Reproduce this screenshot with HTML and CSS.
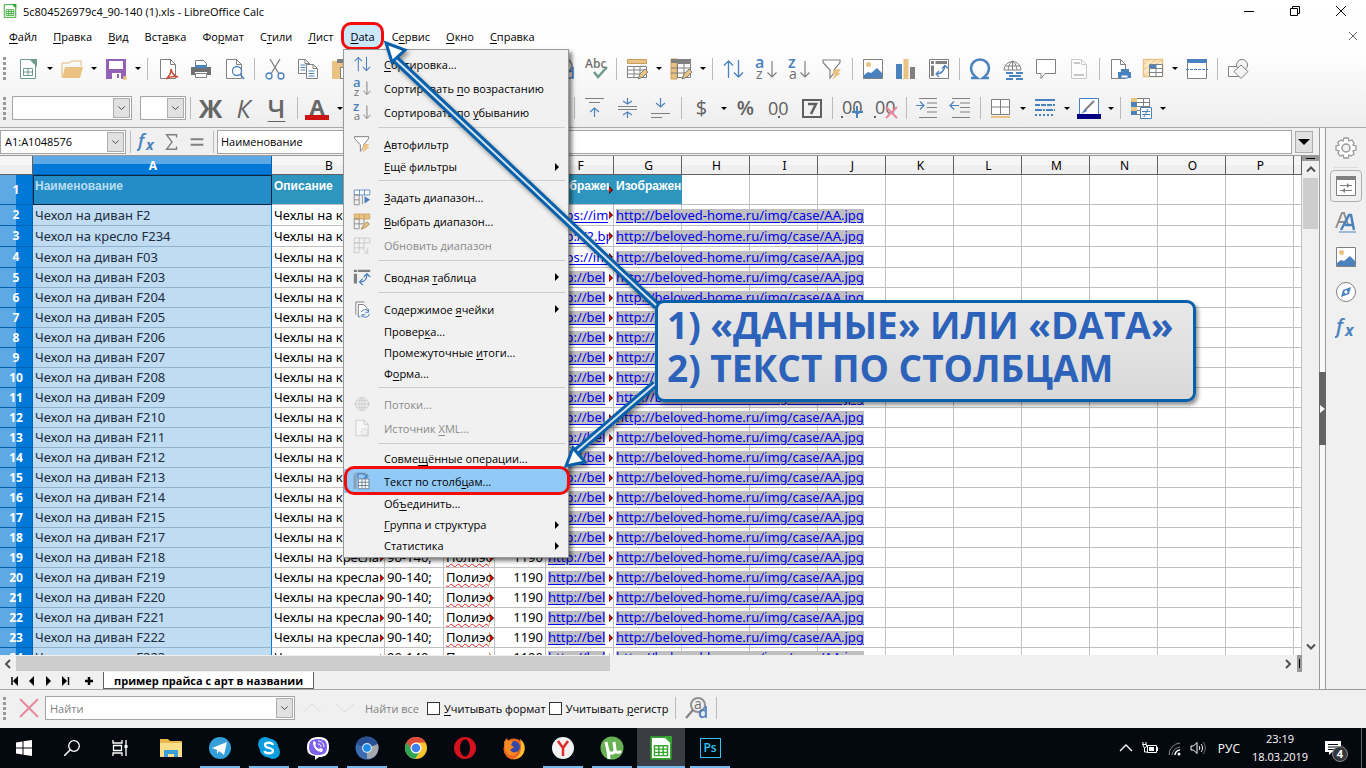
FILE: index.html
```html
<!DOCTYPE html>
<html lang="ru">
<head>
    <meta charset="UTF-8">
    <meta name="viewport" content="width=device-width, initial-scale=1.0">
    <title>5c804526979c4_90-140 (1).xls - LibreOffice Calc</title>
    <link rel="stylesheet" href="styles.css">
</head>
<body>
    <!-- shared icons -->
    <svg class="sprite" aria-hidden="true">
        <symbol id="i-sort" viewBox="0 0 22 22"><path d="M6.500 20V3M2 7.500L6.500 3 11 7.500M16.500 2v17M12 14.500l4.500 4.500 4.500-4.500" fill="none" stroke="#4a82bd" stroke-width="1.300"/></symbol>
        <symbol id="i-az" viewBox="0 0 22 22"><text x="0" y="10" class="g-blue">a</text><text x="1" y="21" class="g-grey">z</text><path d="M17 3v16M12.500 14.500L17 19l4.500-4.500" fill="none" stroke="#808080" stroke-width="1.200"/></symbol>
        <symbol id="i-za" viewBox="0 0 22 22"><text x="0" y="10" class="g-blue">z</text><text x="1" y="21" class="g-grey">a</text><path d="M17 3v16M12.500 14.500L17 19l4.500-4.500" fill="none" stroke="#808080" stroke-width="1.200"/></symbol>
        <symbol id="i-filter" viewBox="0 0 22 22"><path d="M2 2h17v2.500l-6 7.500v3l-4 5v-8L2 4.500z" fill="#fff" stroke="#808080" stroke-width="1.200"/><path d="M14 11h6l-3 4h3l-9 7 3-6h-3z" fill="#eac282"/></symbol>
        <symbol id="i-image" viewBox="0 0 22 22"><path d="M1.500 1.500h19v19h-19z" fill="#fff" stroke="#808080"/><circle cx="6.500" cy="6.500" r="2.500" fill="#eac282"/><path d="M2 20v-3l4-3 3 1 6-5 5 5v5z" fill="#4a82bd"/></symbol>
        <symbol id="i-pivot" viewBox="0 0 22 22"><path d="M1.500 1.500h19v19h-19z" fill="#fff" stroke="#808080"/><path d="M3 3h3v3H3zM7.500 3H19v3H7.500zM3 7.500h3V18H3z" fill="#808080"/><path d="M8 16c5 0 8-3 9-8M14 10.500L17 7.500l3 3M11 13l-3 3 3 3" fill="none" stroke="#4a82bd" stroke-width="1.300"/></symbol>
        <symbol id="i-fx" viewBox="0 0 22 22"><text x="1" y="17" class="g-f">f</text><text x="10" y="20" class="g-x">x</text></symbol>
        <symbol id="i-page" viewBox="0 0 22 22"><path d="M3.500 1.500h10l5 5v14h-15z" fill="#fff" stroke="#808080"/><path d="M13.500 1.500v5h5" fill="none" stroke="#808080"/></symbol>
        <symbol id="i-calc" viewBox="0 0 22 22"><path d="M2 1h13l5 5v15H2z" fill="#fff" stroke="#35a630" stroke-width="1.500"/><path d="M14 0h7v7z" fill="#35a630"/><path d="M5 9h12v9H5zM5 12h12M5 15h12M9 9v9M13 9v9" fill="none" stroke="#35a630" stroke-width="1.300"/></symbol>
        <symbol id="i-globe" viewBox="0 0 22 22"><path d="M3 11a8 8 0 0 1 16 0a8 8 0 0 1-16 0zM1 11h20M11 3v16M11 3c-5 4-5 12 0 16M11 3c5 4 5 12 0 16M4.500 7h13M4.500 15h13" fill="none" stroke="currentColor"/></symbol>
        <symbol id="i-find" viewBox="0 0 22 22"><circle cx="13" cy="8" r="7" fill="none" stroke="#909090" stroke-width="2"/><path d="M8 13l-7 8" stroke="#808080" stroke-width="2"/><text x="9" y="12" class="g-grey">a</text><text x="13" y="21" class="g-blue">d</text></symbol>
        <symbol id="i-down" viewBox="0 0 10 10"><path d="M1 3l4 4 4-4" fill="none" stroke="#444" stroke-width="1.200"/></symbol>
    </svg>

    <header class="top">
        <div class="titlebar">
            <svg class="appicon"><use href="#i-calc"/></svg>
            <h1>5c804526979c4_90-140 (1).xls - LibreOffice Calc</h1>
            <div class="winbtns">
                <button aria-label="Свернуть"><svg viewBox="0 0 12 12"><path d="M1 6.500h10" stroke="#000"/></svg></button>
                <button aria-label="Восстановить"><svg viewBox="0 0 12 12"><path d="M1.500 3.500h7v7h-7zM3.500 3V1.500h7v7H9" fill="none" stroke="#000"/></svg></button>
                <button aria-label="Закрыть"><svg viewBox="0 0 12 12"><path d="M1 1l10 10M11 1L1 11" stroke="#000"/></svg></button>
            </div>
        </div>
        <nav class="menubar">
            <button><u>Ф</u>айл</button>
            <button><u>П</u>равка</button>
            <button><u>В</u>ид</button>
            <button>Вст<u>а</u>вка</button>
            <button>Фо<u>р</u>мат</button>
            <button>С<u>т</u>или</button>
            <button><u>Л</u>ист</button>
            <button class="open"><u>D</u>ata</button>
            <button>С<u>е</u>рвис</button>
            <button><u>О</u>кно</button>
            <button><u>С</u>правка</button>
            <button class="docclose" aria-label="Закрыть документ"><svg viewBox="0 0 10 10"><path d="M1 1l8 8M9 1L1 9" stroke="#666"/></svg></button>
        </nav>

        <div class="toolbar">
            <i class="grip"></i>
            <button class="ic"><svg viewBox="0 0 22 22"><path d="M3.500 1.500h10l5 5v14h-15z" fill="#fff" stroke="#6d9c8e"/><path d="M12 1h8v8z" fill="#6d9c8e"/><path d="M6.500 10.500h9v7h-9zM6.500 14h9M11 10.500v7" fill="none" stroke="#6d9c8e"/></svg></button><button class="dd"></button>
            <button class="ic wide"><svg viewBox="0 0 22 22"><path d="M1 19V5h7l3-2h9v5" fill="none" stroke="#e3b877"/><path d="M1 20L4 9h18l-3 11z" fill="#eac282"/></svg></button><button class="dd"></button>
            <button class="ic"><svg viewBox="0 0 22 22"><path d="M1 1h20v20H1z" fill="#9361b5"/><path d="M4 3h14v8H4zM7 15h9v6H7z" fill="#fff"/><path d="M12 16h2v4h-2z" fill="#9361b5"/><circle cx="20" cy="20" r="2" fill="#eac282"/></svg></button><button class="dd"></button>
            <i class="sep"></i>
            <button class="ic"><svg viewBox="0 0 22 22"><use href="#i-page"/><path d="M9 21c4-3 5-7 5-10 1 5 3 7 7 8-5-1-9 0-12 2z" fill="#fff" stroke="#d04a35" stroke-width="1.500"/></svg></button>
            <button class="ic"><svg viewBox="0 0 22 22"><path d="M5.500 2.500h8l3 3v4h-11z" fill="#fff" stroke="#808080"/><path d="M1 9h20v8h-4v-3H5v3H1z" fill="#707070"/><path d="M5 7h12v3H5z" fill="#4a82bd"/><path d="M5.500 15.500h11v4h-11z" fill="#fff" stroke="#808080"/></svg></button>
            <button class="ic"><svg viewBox="0 0 22 22"><use href="#i-page"/><circle cx="14" cy="13" r="4.500" fill="#fff" stroke="#4a82bd" stroke-width="1.300"/><path d="M17 16l4 5" stroke="#4a82bd" stroke-width="1.500"/></svg></button>
            <i class="sep"></i>
            <button class="ic"><svg viewBox="0 0 22 22"><path d="M6 1l8.500 14M16 1L7.500 15" stroke="#808080" stroke-width="1.300"/><circle cx="5" cy="18" r="3" fill="none" stroke="#4a82bd" stroke-width="1.300"/><circle cx="17" cy="18" r="3" fill="none" stroke="#4a82bd" stroke-width="1.300"/></svg></button>
            <button class="ic"><svg viewBox="0 0 22 22"><path d="M1.500 1.500h7l4 4v10h-11zM8 1.500v4h4" fill="#fff" stroke="#808080"/><path d="M9.500 6.500h7l4 4v10h-11zM16 6.500v4h4" fill="#fff" stroke="#808080"/><path d="M3.500 7h5M3.500 9.500h5M3.500 12h5M11.500 13h6M11.500 15.500h6M11.500 18h6" stroke="#4a82bd"/></svg></button>
            <button class="ic"><svg viewBox="0 0 22 22"><path d="M2 3h18v18H2z" fill="#eac282"/><path d="M7 1h8v4H7z" fill="#808080"/><path d="M10.500 9.500h10v11h-10z" fill="#fff" stroke="#808080"/></svg></button><button class="dd"></button>
            <i class="sep"></i>
            <button class="ic"><svg viewBox="0 0 22 22"><path d="M2 10h14v10H2z" fill="#eac282"/></svg></button>
            <button class="ic"><svg viewBox="0 0 22 22"><path d="M3 18L11 2l8 16" fill="none" stroke="#808080"/></svg></button>
            <i class="sep"></i>
            <button class="ic"><svg viewBox="0 0 22 22"><path d="M3 8h12a5 5 0 0 1 0 10M7 4L3 8l4 4" fill="none" stroke="#4a82bd"/></svg></button><button class="dd"></button>
            <button class="ic"><svg viewBox="0 0 22 22"><path d="M19 8H7a5 5 0 0 0 0 10M15 4l4 4-4 4" fill="none" stroke="#4a82bd"/></svg></button><button class="dd"></button>
            <i class="sep"></i>
            <button class="ic"><svg><use href="#i-find"/></svg></button>
            <button class="ic wide"><svg viewBox="0 0 22 22"><text x="0" y="10" class="g-abc">Abc</text><path d="M9 14l4 5 9-10" fill="none" stroke="#6d9c8e" stroke-width="2.500"/></svg></button>
            <i class="sep"></i>
            <button class="ic"><svg viewBox="0 0 22 22"><path d="M1.500 1.500h19v4h-19z" fill="#eac282" stroke="#c99d5b"/><path d="M1.500 8.500h19v11h-19zM1.500 12h19M1.500 16h19M8 8v12M14 8v12" fill="#fff" stroke="#808080"/><path d="M12 21l2-5 5-5 3 3-5 5z" fill="#eac282" stroke="#808080"/></svg></button><button class="dd"></button>
            <button class="ic"><svg viewBox="0 0 22 22"><path d="M1 1h6v20H1z" fill="#eac282" stroke="#c99d5b"/><path d="M1 1h20v4H1z" fill="#808080"/><path d="M7.500 5.500h13v14h-13zM7 10h13M7 15h13M14 5v15M1 10h6M1 15h6" fill="none" stroke="#808080"/><path d="M12 21l2-5 5-5 3 3-5 5z" fill="#eac282" stroke="#808080"/></svg></button><button class="dd"></button>
            <i class="sep"></i>
            <button class="ic"><svg><use href="#i-sort"/></svg></button>
            <button class="ic"><svg><use href="#i-az"/></svg></button>
            <button class="ic"><svg><use href="#i-za"/></svg></button>
            <button class="ic"><svg><use href="#i-filter"/></svg></button>
            <i class="sep"></i>
            <button class="ic"><svg><use href="#i-image"/></svg></button>
            <button class="ic"><svg viewBox="0 0 22 22"><path d="M1 6h6v15H1z" fill="#4a82bd"/><path d="M8.500 1h5v20h-5z" fill="#eac282"/><path d="M15 9h5v12h-5z" fill="#808080"/></svg></button>
            <button class="ic"><svg><use href="#i-pivot"/></svg></button>
            <i class="sep"></i>
            <button class="ic"><svg viewBox="0 0 22 22"><path d="M2 20h6c-4-3-6-6-6-10a9 8.500 0 0 1 18 0c0 4-2 7-6 10h6" fill="none" stroke="#4a82bd" stroke-width="2.500"/></svg></button>
            <button class="ic"><svg viewBox="0 0 22 22"><path d="M2 12a8.500 8.500 0 0 1 17 0zM10.500 3v9M10.500 3c-5 4-4 8-4 9M10.500 3c5 4 4 8 4 9M3 8h15" fill="none" stroke="#808080"/><path d="M4 15h7M14 15h7M7 18h12M4 21h7M14 21h7" stroke="#4a82bd" stroke-width="2"/></svg></button>
            <button class="ic"><svg viewBox="0 0 22 22"><path d="M1.500 1.500h19v14H10l-4 5v-5H1.500z" fill="#fff" stroke="#808080"/></svg></button>
            <button class="ic dim"><svg viewBox="0 0 22 22"><use href="#i-page"/><path d="M6 5h6M6 17h10" stroke="#808080" stroke-width="2"/></svg></button>
            <i class="sep"></i>
            <button class="ic"><svg viewBox="0 0 22 22"><path d="M2.500 1.500h9l5 5v14h-14zM11.500 1.500v5h5" fill="#fff" stroke="#808080"/><path d="M12 11h8v3h-8zM9 14h13v6H9z" fill="#4a82bd"/><path d="M12 17h7v3h-7z" fill="#fff" stroke="#4a82bd"/></svg></button>
            <button class="ic"><svg viewBox="0 0 22 22"><path d="M1.500 1.500h19v17h-19z" fill="#fbe9cb" stroke="#eac282" stroke-width="1.500"/><path d="M1 7l6-5M8 6l6-4M14 6l6-4M1 12l6-4M1 18l6-4" stroke="#eac282"/><path d="M7.500 6.500h13v12h-13zM7.500 10.500h13M7.500 14.500h13M14 6.500v12" fill="#fff" stroke="#808080"/><path d="M8 7h6v3H8z" fill="#4a82bd"/></svg></button><button class="dd"></button>
            <button class="ic"><svg viewBox="0 0 22 22"><path d="M1.500 1.500h19v19h-19z" fill="#fff" stroke="#808080"/><path d="M1 1h20v4H1z" fill="#4a82bd"/><path d="M0 11.500h22" stroke="#4a82bd" stroke-dasharray="3 1"/></svg></button>
            <i class="sep"></i>
            <button class="ic"><svg viewBox="0 0 22 22"><path d="M1.500 8.500h11v10h-11z" fill="#fff" stroke="#808080"/><circle cx="15" cy="7" r="5.500" fill="#f4f4f4" stroke="#808080"/><path d="M14 7l7 6.500-7 7-7-7z" fill="#f4f4f4" stroke="#808080"/></svg></button>
        </div>

        <div class="toolbar second">
            <i class="grip"></i>
            <span class="combo fontname"><select aria-label="Гарнитура"><option></option></select><svg><use href="#i-down"/></svg></span>
            <span class="combo fontsize"><select aria-label="Размер"><option></option></select><svg><use href="#i-down"/></svg></span>
            <i class="sep"></i>
            <button class="ic letter"><b>Ж</b></button>
            <button class="ic letter"><em>К</em></button>
            <button class="ic letter"><u>Ч</u></button>
            <i class="sep"></i>
            <button class="ic letter color">A</button><button class="dd"></button>
            <button class="ic letter">A</button><button class="dd"></button>
            <i class="sep"></i>
            <button class="ic"></button><button class="ic"></button><button class="ic"></button>
            <i class="sep"></i>
            <button class="ic"></button><button class="ic"></button>
            <i class="sep"></i>
            <button class="ic"><svg viewBox="0 0 22 22"><path d="M1 1.500h19M5 5.500h11" stroke="#808080"/><path d="M10.500 20v-9M6 15l4.500-4 4.500 4" fill="none" stroke="#4a82bd" stroke-width="1.200"/></svg></button>
            <button class="ic"><svg viewBox="0 0 22 22"><path d="M1 9.500h19M1 12.500h19" stroke="#808080"/><path d="M10.500 1v6M6 4l4.500 3L15 4M10.500 21v-6M6 18l4.500-3 4.500 3" fill="none" stroke="#4a82bd" stroke-width="1.200"/></svg></button>
            <button class="ic"><svg viewBox="0 0 22 22"><path d="M1 20.500h11M1 16.500h19" stroke="#808080"/><path d="M10.500 1v9M6 6l4.500 4L15 6" fill="none" stroke="#4a82bd" stroke-width="1.200"/></svg></button>
            <i class="sep"></i>
            <button class="ic num">$</button><button class="dd"></button>
            <button class="ic num pct">%</button>
            <button class="ic wide"><svg viewBox="0 0 22 22"><text x="0" y="18" class="g-num">00</text><path d="M10 19h2v2h-2z" fill="#606060"/></svg></button>
            <button class="ic"><svg viewBox="0 0 22 22"><path d="M2 3h18v17H2z" fill="none" stroke="#606060" stroke-width="2"/><path d="M7 7h8l-5 10" fill="none" stroke="#606060" stroke-width="2.500"/></svg></button>
            <i class="sep"></i>
            <button class="ic wide"><svg viewBox="0 0 22 22"><text x="0" y="17" class="g-num">00</text><path d="M-1 19h2v2h-2z" fill="#606060"/><path d="M15 9v12M10 15h11" stroke="#4a82bd" stroke-width="2"/></svg></button>
            <button class="ic wide"><svg viewBox="0 0 22 22"><text x="0" y="17" class="g-num">00</text><path d="M-1 19h2v2h-2z" fill="#606060"/><path d="M11 10l11 11M22 10L11 21" stroke="#e8889c" stroke-width="2"/></svg></button>
            <i class="sep"></i>
            <button class="ic"><svg viewBox="0 0 22 22"><path d="M3 1.500h18M11 6h10M11 10.500h10M11 15h10M3 20.500h18" stroke="#808080"/><path d="M0 8.500h8M4 4.500l4 4-4 4" fill="none" stroke="#4a82bd" stroke-width="1.200"/></svg></button>
            <button class="ic"><svg viewBox="0 0 22 22"><path d="M3 1.500h18M11 6h10M11 10.500h10M11 15h10M3 20.500h18" stroke="#808080"/><path d="M1 8.500h9M5 4.500l-4 4 4 4" fill="none" stroke="#4a82bd" stroke-width="1.200"/></svg></button>
            <i class="sep"></i>
            <button class="ic"><svg viewBox="0 0 22 22"><path d="M1.500 2.500h18v15h-18zM1.500 10h18M10.500 2.500v15" fill="#fff" stroke="#808080"/><path d="M1 20h19" stroke="#eac282" stroke-width="2"/></svg></button><button class="dd"></button>
            <button class="ic"><svg viewBox="0 0 22 22"><path d="M1 3h20" stroke="#4a82bd" stroke-width="2"/><path d="M1 8h20" stroke="#4a82bd" stroke-width="2" stroke-dasharray="5 1"/><path d="M1 13h20" stroke="#4a82bd" stroke-width="2" stroke-dasharray="7 1 2 1"/><path d="M1 18h20" stroke="#4a82bd" stroke-width="2" stroke-dasharray="2 2"/></svg></button><button class="dd"></button>
            <button class="ic wide"><svg viewBox="0 0 24 22"><path d="M2.500 1.500h19v16h-19z" fill="#fff" stroke="#4a82bd"/><path d="M17 4l-9 9" stroke="#808080" stroke-width="2"/><path d="M4 17l4-5 2 2z" fill="#4a82bd"/><path d="M0 17h24v5H0z" fill="#000080"/></svg></button><button class="dd"></button>
            <i class="sep"></i>
            <button class="ic"><svg viewBox="0 0 22 22"><path d="M1.500 1.500h18v16h-18zM1 5.500h18M1 9.500h18M1 13.500h18M13.500 1v16" fill="#fff" stroke="#808080"/><path d="M1 1h6v4H1zM1 10h6v4H1z" fill="#eac282"/><path d="M1 5h6v5H1zM1 14h6v4H1z" fill="#4a82bd"/><path d="M10.500 10.500h11v11h-11z" fill="#fff" stroke="#4a82bd"/><path d="M12 14.500h8M12 17.500h8M18 12l-4 8" stroke="#4a82bd"/></svg></button><button class="dd"></button>
        </div>
    </header>

    <main class="work">
        <section class="book">
            <div class="formulabar">
                <span class="combo namebox"><input type="text" aria-label="Область листа" value="A1:A1048576"><svg><use href="#i-down"/></svg></span>
                <i class="sep"></i>
                <button class="fb"><svg><use href="#i-fx"/></svg></button>
                <button class="fb"><svg viewBox="0 0 22 22"><path d="M16 6V3H5l6 8-6 8h11v-3" fill="none" stroke="#808080" stroke-width="1.500"/></svg></button>
                <button class="fb"><svg viewBox="0 0 22 22"><path d="M4 8h14M4 14h14" stroke="#808080" stroke-width="2"/></svg></button>
                <i class="sep"></i>
                <input class="formula" type="text" aria-label="Строка ввода" value="Наименование">
                <button class="expand" aria-label="Развернуть"></button>
            </div>

            <div class="gridrow">
                <div class="gridwrap">
                    <table class="sheet">
                        <colgroup>
                            <col class="c-num"><col class="c-a"><col class="c-b"><col class="c-c"><col class="c-d"><col class="c-d">
                            <col class="c-std"><col class="c-std"><col class="c-std"><col class="c-std"><col class="c-std"><col class="c-std"><col class="c-std"><col class="c-std"><col class="c-std"><col class="c-std"><col class="c-std">
                            <col>
                        </colgroup>
                        <thead>
                            <tr><th></th><th class="sel">A</th><th>B</th><th>C</th><th>D</th><th>E</th><th>F</th><th>G</th><th>H</th><th>I</th><th>J</th><th>K</th><th>L</th><th>M</th><th>N</th><th>O</th><th>P</th><th></th></tr>
                        </thead>
                        <tbody id="rows"></tbody>
                    </table>
                </div>
                <div class="vscroll">
                    <i class="split"></i>
                    <svg viewBox="0 0 10 10"><path d="M1 7l4-4 4 4" fill="none" stroke="#505050" stroke-width="2"/></svg>
                    <i class="thumb"></i>
                    <svg class="last" viewBox="0 0 10 10"><path d="M1 3l4 4 4-4" fill="none" stroke="#505050" stroke-width="2"/></svg>
                </div>
            </div>

            <div class="hscroll">
                <svg viewBox="0 0 10 10"><path d="M7 1L3 5l4 4" fill="none" stroke="#505050" stroke-width="2"/></svg>
                <i class="thumb"></i>
                <svg class="last" viewBox="0 0 10 10"><path d="M3 1l4 4-4 4" fill="none" stroke="#505050" stroke-width="2"/></svg>
                <i class="split"></i>
            </div>

            <div class="tabs">
                <button aria-label="Первый лист"><svg viewBox="0 0 10 10"><path d="M2 1v8" stroke="#000" stroke-width="1.500"/><path d="M8 0v10L3 5z"/></svg></button>
                <button aria-label="Предыдущий лист"><svg viewBox="0 0 10 10"><path d="M7 0v10L2 5z"/></svg></button>
                <button aria-label="Следующий лист"><svg viewBox="0 0 10 10"><path d="M2 0v10l5-5z"/></svg></button>
                <button aria-label="Последний лист"><svg viewBox="0 0 10 10"><path d="M7.500 1v8" stroke="#000" stroke-width="1.500"/><path d="M1 0v10l5-5z"/></svg></button>
                <button class="add" aria-label="Добавить лист"><svg viewBox="0 0 10 10"><path d="M5 1v8M1 5h8" stroke="#000" stroke-width="2.500"/></svg></button>
                <button class="tab">пример прайса с арт в названии</button>
            </div>
        </section>

        <div class="handle"><i></i></div>

        <aside class="sidebar">
            <button><svg viewBox="0 0 22 22"><path d="M9 1h4l1 3 3-1 2 3-1 2 3 1v4l-3 1 1 3-3 2-2-1-1 3H9l-1-3-3 1-2-3 1-2-3-1V9l3-1-1-3 3-2 2 1z" fill="#fff" stroke="#999" stroke-width="1.300"/><circle cx="11" cy="11" r="4" fill="#f2f2f2" stroke="#999" stroke-width="1.500"/></svg></button>
            <hr>
            <button class="on"><svg viewBox="0 0 22 22"><path d="M1.500 1.500h19v19h-19z" fill="#fff" stroke="#808080"/><path d="M1 1h20v4H1z" fill="#808080"/><path d="M5 10.500h12M5 15.500h12" stroke="#808080"/><path d="M12 8l3 2.500-3 2.500zM10 13l-3 2.500 3 2.500z" fill="#808080"/></svg></button>
            <button><svg viewBox="0 0 22 22"><path d="M1 17L7 2h2l4 12M4 11h6" fill="none" stroke="#909090" stroke-width="2"/><path d="M6 19L14 4h2l3 15M10 14h8" fill="none" stroke="#4a82bd" stroke-width="2.500"/><path d="M4 21h17" stroke="#4a82bd"/></svg></button>
            <button><svg><use href="#i-image"/></svg></button>
            <button><svg viewBox="0 0 22 22"><circle cx="11" cy="11" r="9.500" fill="#fff" stroke="#808080"/><path d="M16 6l-2 7-8 3 2-7z" fill="#4a82bd"/><path d="M11 9l2 2-2 2-2-2z" fill="#fff"/></svg></button>
            <button><svg><use href="#i-fx"/></svg></button>
        </aside>
    </main>

    <form class="findbar">
        <i class="grip"></i>
        <button type="button" class="ic" aria-label="Закрыть"><svg viewBox="0 0 22 22"><path d="M2 2l18 18M20 2L2 20" stroke="#e8889c" stroke-width="2"/></svg></button>
        <span class="combo find"><input type="text" aria-label="Найти" placeholder="Найти"><svg><use href="#i-down"/></svg></span>
        <button type="button" class="ic faint"><svg viewBox="0 0 22 22"><path d="M2 15l9-8 9 8" fill="none" stroke="#ddd"/></svg></button>
        <button type="button" class="ic faint"><svg viewBox="0 0 22 22"><path d="M2 7l9 8 9-8" fill="none" stroke="#ddd"/></svg></button>
        <button type="button" class="all">Найти все</button>
        <label><input type="checkbox"><span><u>У</u>читывать формат</span></label>
        <label><input type="checkbox"><span>Учитывать <u>р</u>егистр</span></label>
        <i class="sep"></i>
        <button type="button" class="ic"><svg><use href="#i-find"/></svg></button>
        <i class="sep"></i>
    </form>

    <footer class="taskbar">
        <button class="sys"><svg viewBox="0 0 16 16"><path d="M0 2.500L6.500 1.500v6H0zM7.500 1.300L16 0v7.500H7.500zM0 8.500h6.500v6L0 13.500zM7.500 8.500H16V16l-8.500-1.300z" fill="#fff"/></svg></button>
        <button class="sys"><svg viewBox="0 0 16 16"><circle cx="10" cy="6" r="5.300" fill="none" stroke="#fff" stroke-width="1.300"/><path d="M6 10l-6 6" stroke="#fff" stroke-width="1.500"/></svg></button>
        <button class="sys"><svg viewBox="0 0 16 16"><path d="M1 0v3h9V0M1 16v-3h9v3M1.500 5.500h8v5h-8zM14 0v16" fill="none" stroke="#fff" stroke-width="1.300"/><path d="M12.500 5h3v3h-3z" fill="#fff"/></svg></button>
        <i class="taskgap"></i>
        <button><svg viewBox="0 0 24 24"><path d="M1 3h8l2 2h12v15H1z" fill="#e8b84a"/><path d="M1 7h22v14H1z" fill="#fbe08b"/><path d="M5 21v-7h14v7h-4v-3H9v3z" fill="#3b9fd8"/></svg></button>
        <button class="run"><svg viewBox="0 0 24 24"><circle cx="12" cy="12" r="11" fill="#33a0d9"/><path d="M4 12l15-6-3 13-5-4-2 3v-4z" fill="#fff"/></svg></button>
        <button class="run"><svg viewBox="0 0 24 24"><circle cx="8" cy="8" r="7" fill="#0b9fe0"/><circle cx="16" cy="16" r="7" fill="#0b9fe0"/><circle cx="12" cy="12" r="9.500" fill="#0b9fe0"/><path d="M16 9c-1-3-8-3-8 0 0 4 8 2 8 6 0 3-8 3-8.500 0" fill="none" stroke="#fff" stroke-width="2.300"/></svg></button>
        <button class="run"><svg viewBox="0 0 24 24"><path d="M12 1c7 0 11 2 11 10s-4 10-10 10l-4 3v-4C3 19 1 17 1 11S5 1 12 1z" fill="#fff"/><path d="M12 3c6 0 9 2 9 8s-3 8-9 8-9-2-9-8 3-8 9-8z" fill="#7c62ea"/><path d="M7 6c0 6 4 10 9 10l1-3-3-1-1 1c-2-1-3-2-4-4l1-1-1-3z" fill="#fff"/><path d="M12 5c4 0 6 3 6 6M12 8c2 0 3 1 3 3" fill="none" stroke="#fff"/></svg></button>
        <button class="run"><svg viewBox="0 0 24 24"><circle cx="12" cy="12" r="11.500" fill="#3b6cb0"/><path d="M12 12L1 8C3 3 8 0 13 1c5 0 9 4 10 8z" fill="#2a4f93"/><path d="M12 12l11-4c2 8-3 15-11 15z" fill="#a5a9ae"/><circle cx="12" cy="12" r="5" fill="#cfe5fb"/><circle cx="12" cy="12" r="3.800" fill="#1f8ae8"/></svg></button>
        <button><svg viewBox="0 0 24 24"><circle cx="12" cy="12" r="11" fill="#f7c62f"/><path d="M2.500 6.500A11 11 0 0 1 21.500 6.500H12L8 15z" fill="#dd4b3e"/><path d="M2.500 6.500A11 11 0 0 0 11 23l5-8-8-1z" fill="#2fa555"/><circle cx="12" cy="12" r="5.500" fill="#fff"/><circle cx="12" cy="12" r="4.300" fill="#3f82ee"/></svg></button>
        <button><svg viewBox="0 0 24 24"><ellipse cx="12" cy="12" rx="11" ry="11" fill="#d4121d"/><ellipse cx="12" cy="12" rx="5" ry="8.500" fill="#04090f"/></svg></button>
        <button><svg viewBox="0 0 24 24"><circle cx="12" cy="13" r="10.500" fill="#f2651f"/><path d="M18 3c4 3 6 8 4 13-2 5-7 7-11 7 7-2 10-10 7-20z" fill="#fcc132"/><circle cx="12" cy="11" r="6" fill="#3548a5"/><path d="M2 6l3-4 1 3 5 0-2 4 3 2-4 3c2 3 6 3 8 1-1 4-6 6-10 3-3-3-3-7-4-12z" fill="#f78a25"/></svg></button>
        <button class="run"><svg viewBox="0 0 24 24"><circle cx="12" cy="12" r="11" fill="#f2f2f2"/><path d="M7 5l5 7v8M17 5l-5 7" fill="none" stroke="#e02b2b" stroke-width="2.500"/></svg></button>
        <button class="run"><svg viewBox="0 0 24 24"><circle cx="12" cy="12" r="11.500" fill="#69b253"/><path d="M6 6l2 9c1 3 7 3 7-1l-1-8M15 14c1 3 4 3 6 1M8 15l1 8" fill="none" stroke="#fff" stroke-width="3"/></svg></button>
        <button class="run active"><svg><use href="#i-calc"/></svg></button>
        <button class="run ps"><span>Ps</span></button>

        <div class="tray">
            <svg viewBox="0 0 16 16"><path d="M2 11l6-6 6 6" fill="none" stroke="#fff" stroke-width="1.300"/></svg>
            <svg viewBox="0 0 16 16"><path d="M5.500 5.500h9v7h-9z" fill="none" stroke="#fff"/><path d="M7 7h5v4H7zM15 7h1v4h-1z" fill="#fff"/><path d="M1 2v2M4 2v2M0.500 4.500h4v2l-2 1.500zM2.500 8v4h3" fill="none" stroke="#fff"/></svg>
            <svg viewBox="0 0 16 16"><path d="M3 15A12 12 0 0 1 14 3M6 15a9 9 0 0 1 8-8" fill="none" stroke="#888"/><path d="M9 15a5 5 0 0 1 5-5" fill="none" stroke="#fff" stroke-width="1.500"/><circle cx="13" cy="14" r="1.500" fill="#fff"/></svg>
            <svg viewBox="0 0 16 16"><path d="M1 6h2.500L7 2.500v11L3.500 10H1z" fill="none" stroke="#fff"/><path d="M9 6c1 1 1 3 0 4M11 4c2 2 2 6 0 8" fill="none" stroke="#fff"/><path d="M13 2c3 3 3 9 0 12" fill="none" stroke="#777"/></svg>
            <span class="lang">РУС</span>
            <time class="clock">23:19<br>18.03.2019</time>
            <span class="notes"><svg viewBox="0 0 16 16"><path d="M0 1h16v11h-9l-3 3v-3H0z" fill="#fff"/><path d="M3 4.500h10M3 7h10M3 9.500h6" stroke="#04090f"/></svg><b>4</b></span>
        </div>
    </footer>

    <!-- opened Data menu -->
    <ul class="menu">
        <li class="icon"><svg><use href="#i-sort"/></svg><span><u>С</u>ортировка...</span></li>
        <li class="icon"><svg><use href="#i-az"/></svg><span>Сортировать <u>п</u>о возрастанию</span></li>
        <li class="icon"><svg><use href="#i-za"/></svg><span>Сортировать по <u>у</u>быванию</span></li>
        <li class="line"></li>
        <li class="icon"><svg><use href="#i-filter"/></svg><span><u>А</u>втофильтр</span></li>
        <li class="sub"><span><u>Е</u>щё фильтры</span></li>
        <li class="line"></li>
        <li class="icon"><svg viewBox="0 0 22 22"><path d="M1.500 2.500h19v6h-19zM8 2.500v6M14 2.500v6" fill="#fff" stroke="#4a82bd"/><path d="M1.500 8.500v12h6v-12zM1.500 14.500h6M11.500 9v11" fill="none" stroke="#808080"/><path d="M14 10v9l7-4.500z" fill="#4a82bd"/></svg><span><u>З</u>адать диапазон...</span></li>
        <li class="icon"><svg viewBox="0 0 22 22"><path d="M1.500 2.500h19v6h-19zM8 2.500v6M14 2.500v6" fill="#eac282" stroke="#c99d5b"/><path d="M1.500 8.500v12h6v-12zM1.500 14.500h6M7.500 14.500h6v-6" fill="none" stroke="#808080"/><path d="M10 21l2-4 5-5 3 3-5 4z" fill="#eac282" stroke="#a08050"/></svg><span><u>В</u>ыбрать диапазон...</span></li>
        <li class="icon off"><svg viewBox="0 0 22 22"><path d="M1.500 2.500h19v6h-19zM8 2.500v6M14 2.500v6M1.500 8.500v12h6v-12zM1.500 14.500h12v-6M11 14l7 7M18 14v7h-5" fill="none" stroke="#808080"/></svg><span>Обновить <u>д</u>иапазон</span></li>
        <li class="line"></li>
        <li class="icon sub"><svg viewBox="0 0 22 22"><path d="M1 2h4v3H1zM6 2h15v3H6zM1 7h4v12H1z" fill="#808080"/><path d="M9 17c5 0 8-2 8-9M13 11l4-4 4 4M12 13l-4 4 4 4" fill="none" stroke="#4a82bd" stroke-width="1.500"/></svg><span>Сводная <u>т</u>аблица</span></li>
        <li class="line"></li>
        <li class="icon sub"><svg viewBox="0 0 22 22"><path d="M3.500 18V2.500H14M6.500 20.500v-15H13l4 4v3" fill="#fff" stroke="#808080" stroke-width="1.200"/><path d="M9 20.500H6.500M10 15a5 5 0 0 1 9-1M20 17a5 5 0 0 1-9 2M19 11v4h-4M11 21v-3h4" fill="none" stroke="#4a82bd" stroke-width="1.200"/></svg><span>Содержимое <u>я</u>чейки</span></li>
        <li><span>Провер<u>к</u>а...</span></li>
        <li><span>Промежуточные <u>и</u>тоги...</span></li>
        <li><span>Ф<u>о</u>рма...</span></li>
        <li class="line"></li>
        <li class="icon off"><svg><use href="#i-globe"/></svg><span>Потоки...</span></li>
        <li class="icon off"><svg viewBox="0 0 22 22"><use href="#i-page"/><circle cx="14" cy="16" r="4" fill="#eee" stroke="#808080" stroke-dasharray="2 1"/></svg><span>Источник <u>X</u>ML...</span></li>
        <li class="line"></li>
        <li><span>Совме<u>щ</u>ённые операции...</span></li>
        <li class="icon chosen"><svg viewBox="0 0 22 22"><path d="M3.500 20.500v-19h12l4 4M1.500 3v18" fill="none" stroke="#808080"/><path d="M6 8V3c4-2 9-1 11 4M17 3v4h-4" fill="none" stroke="#4a82bd" stroke-width="1.500"/><path d="M6.500 8.500h13v12h-13zM6.500 12.500h13M6.500 16.500h13M11 8.500v12M15 8.500v12" fill="#fff" stroke="#5d7186"/></svg><span>Текст по столб<u>ц</u>ам...</span></li>
        <li><span>Об<u>ъ</u>единить...</span></li>
        <li class="sub"><span><u>Г</u>руппа и структура</span></li>
        <li class="sub"><span>Статистика</span></li>
    </ul>

    <!-- hint with two arrows -->
    <svg class="arrows" viewBox="0 0 400 440">
        <path d="M318 266L55 18M316 344L238 411" class="a-blue"/>
        <path d="M318 266L55 18M316 344L238 411" class="a-white"/>
        <path d="M47 3l19 7-13 12zM227 426l7-18 12 14z" class="a-head"/>
    </svg>
    <div class="callout">1) «ДАННЫЕ» ИЛИ «DATA»<br>2) ТЕКСТ ПО СТОЛБЦАМ</div>

    <script>
        // product names, one per sheet row starting from row 2
        const NAMES = ['Чехол на диван F2', 'Чехол на кресло F234', 'Чехол на диван F03'];
        const CODES = [203, 204, 205, 206, 207, 208, 209, 210, 211, 212, 213, 214, 215, 217, 218, 219, 220, 221, 222, 223];
        CODES.forEach(function(code){
            NAMES.push('Чехол на диван F' + code);
        });

        // first rows have other picture links
        const LINKS = ['https://img', 'http://2.bp', 'https://img'];
        const PHOTO = 'http://beloved-home.ru/img/case/AA.jpg';
        const EMPTY = '<td></td>'.repeat(10);

        function clip(text){
            return '<td class="cut"><div>' + text + '</div></td>';
        }

        var html = '<tr class="head"><th>1</th><td class="a">Наименование</td><td>Описание</td><td></td><td></td><td></td>'
            + clip('Изображение') + '<td class="nospill">Изображение</td>' + EMPTY + '</tr>';

        NAMES.forEach(function(name, i){
            var link = LINKS[i] ? '<a class="plain" href="#">' + LINKS[i] + '</a>' : '<a href="#">http://bel</a>';
            html += '<tr' + (i < 3 ? ' class="tall"' : '') + '><th>' + (i + 2) + '</th>'
                + '<td class="a">' + name + '</td>'
                + clip('Чехлы на кресла')
                + '<td class="nospill">90-140;</td>'
                + clip('<span class="typo">Полиэф</span>')
                + '<td class="price">1190</td>'
                + clip(link)
                + '<td><a href="#">' + PHOTO + '</a></td>' + EMPTY + '</tr>';
        });
        document.getElementById('rows').innerHTML = html;
    </script>
</body>
</html>
```

FILE: styles.css
```css
*{
    box-sizing: border-box;
}
body{
    margin: 0;
    height: 100vh;
    display: flex;
    flex-direction: column;
    position: relative;
    overflow: hidden;
    background-color: #f0f0f0;
    color: #000;
    font-family: "Open Sans", "Noto Sans", sans-serif;
    font-size: 11px;
}
button, input, select{
    font: inherit;
    color: inherit;
}
button{
    padding: 0;
    border: none;
    background: none;
    display: flex;
    align-items: center;
    justify-content: center;
}
svg{
    display: block;
    flex: none;
}
u{
    text-underline-offset: 2px;
}
.sprite{
    position: absolute;
    width: 0;
    height: 0;
}

/* letters inside icons */
.g-blue{
    font-size: 16px;
    font-weight: 600;
    fill: #4a82bd;
}
.g-grey{
    font-size: 14px;
    fill: #707070;
}
.g-abc{
    font-size: 12px;
    font-weight: 600;
    fill: #707070;
}
.g-num{
    font-size: 18px;
    fill: #606060;
}
.g-f{
    font-size: 20px;
    font-style: italic;
    font-weight: 600;
    fill: #4a82bd;
}
.g-x{
    font-size: 16px;
    font-style: italic;
    font-weight: 700;
    fill: #4a82bd;
}

/* title and menu */
.top{
    background: linear-gradient(#fff, #fefefe 40%, #eee);
    border-bottom: 1px solid #a8a8a8;
}
.titlebar{
    height: 24px;
    display: flex;
    align-items: center;
    padding: 0 0 2px 3px;
    gap: 6px;
}
.appicon{
    width: 14px;
    height: 16px;
}
.titlebar h1{
    margin: 0;
    flex: 1;
    font-size: 11px;
    font-weight: 400;
}
.winbtns{
    display: flex;
    margin-right: 2px;
}
.winbtns button{
    width: 46px;
    height: 20px;
}
.winbtns svg{
    width: 12px;
    height: 12px;
}
.menubar{
    height: 26px;
    display: flex;
    align-items: center;
    padding: 0 0 2px 1px;
}
.menubar button{
    height: 28px;
    padding: 0 8px;
}
.menubar .open{
    padding: 0 6px;
    border: 3px solid #f40b0b;
    border-radius: 10px;
    background-color: #cce8ff;
}
.menubar .docclose{
    margin-left: auto;
}
.docclose svg{
    width: 10px;
    height: 10px;
}

/* toolbars */
.toolbar{
    height: 39px;
    display: flex;
    align-items: center;
    padding: 0 0 2px 3px;
    overflow: hidden;
}
.toolbar.second{
    height: 38px;
    padding-bottom: 0;
}
.grip{
    flex: none;
    width: 3px;
    height: 23px;
    margin-right: 5px;
    background: repeating-linear-gradient(#999 0 3px, transparent 3px 5px);
}
.second .grip, .findbar .grip{
    margin-right: 6px;
}
.ic{
    flex: none;
    width: 33px;
    height: 30px;
}
.ic svg{
    width: 22px;
    height: 22px;
}
.wide svg{
    width: 24px;
    overflow: visible;
}
.dim{
    opacity: 0.4;
}
.dd{
    flex: none;
    width: 11px;
    height: 30px;
}
.dd::before{
    content: "";
    border: 3px solid transparent;
    border-top-color: #000;
    border-bottom: none;
}
.sep{
    flex: none;
    width: 8px;
    height: 22px;
    background: linear-gradient(#bbb, #bbb) center / 1px 100% no-repeat;
}
.combo{
    flex: none;
    display: flex;
    align-items: center;
    height: 24px;
    padding: 1px;
    border: 1px solid #a5a5a5;
    background-color: #fff;
}
.combo select, .combo input{
    flex: 1;
    min-width: 0;
    height: 20px;
    border: none;
    padding: 0 3px;
    outline: none;
    background: none;
    appearance: none;
}
.combo svg{
    width: 17px;
    height: 20px;
    padding: 5px 3px;
    border: 1px solid #adadad;
    background-color: #e1e1e1;
}
.fontname{
    width: 120px;
    margin-right: 8px;
}
.fontsize{
    width: 46px;
}
.letter{
    font-size: 25px;
    line-height: 26px;
    color: #666;
}
.letter u{
    text-decoration-thickness: 1px;
    text-underline-offset: 3px;
    font-weight: 600;
}
.letter.color{
    height: 24px;
    width: 24px;
    margin: 0 5px 0 4px;
    border-bottom: 5px solid #cc1414;
    font-size: 22px;
    line-height: 18px;
    font-weight: 700;
}
.num{
    font-size: 20px;
    line-height: 22px;
    color: #606060;
}
.pct{
    font-weight: 600;
}

/* sheet area */
.work{
    flex: 1;
    min-height: 0;
    display: flex;
}
.book{
    flex: 1;
    min-width: 0;
    display: flex;
    flex-direction: column;
}
.formulabar{
    height: 28px;
    display: flex;
    align-items: center;
    padding-right: 6px;
    border-bottom: 1px solid #999;
}
.namebox{
    width: 126px;
}
.fb{
    width: 25px;
    height: 24px;
}
.fb svg{
    width: 20px;
    height: 20px;
}
.formula{
    flex: 1;
    height: 24px;
    padding: 0 3px;
    margin-right: 3px;
    border: 1px solid #a5a5a5;
    outline: none;
}
.expand{
    width: 18px;
    height: 22px;
    border: 1px solid #adadad;
    background-color: #e1e1e1;
}
.expand::before{
    content: "";
    border: 6px solid transparent;
    border-top-color: #000;
    border-bottom: none;
}
.gridrow{
    flex: 1;
    min-height: 0;
    display: flex;
}
.gridwrap{
    flex: 1;
    min-width: 0;
    overflow: hidden;
    background-color: #fff;
}
.sheet{
    width: 100%;
    table-layout: fixed;
    border-collapse: separate;
    border-spacing: 0;
    font-family: "Noto Sans", "Open Sans", sans-serif;
    font-size: 13px;
}
.c-num{ width: 33px; }
.c-a{ width: 239px; }
.c-b{ width: 113px; }
.c-c{ width: 59px; }
.c-d{ width: 51px; }
.c-std{ width: 68px; }
.sheet th, .sheet td{
    padding: 0 2px;
    height: 20px;
    line-height: 19px;
    white-space: nowrap;
    border-right: 1px solid #c0c0c0;
    border-bottom: 1px solid #c0c0c0;
}
.sheet td{
    text-align: left;
}
.sheet thead th{
    height: 19px;
    padding: 2px 0 0 2px;
    line-height: 16px;
    font-size: 12px;
    font-weight: 400;
    border-color: #606060;
    background: linear-gradient(#f6f6f6 50%, #efefef 50%);
}
.sheet thead .sel{
    color: #fff;
    font-weight: 700;
    background: linear-gradient(#5ca9e6 45%, #0078d7 45%);
    border-color: #0063b1;
}
.sheet tbody th{
    padding: 0;
    font-size: 12px;
    color: #fff;
    border-color: #0063b1;
    background: linear-gradient(90deg, #5ca9e6 16px, #0078d7 16px);
}
.sheet .tall th, .sheet .tall td{
    height: 21px;
    line-height: 20px;
}
.sheet .a{
    color: #1c2d3d;
    background-color: #c0dcf3;
    border-color: #0078d7;
    border-bottom-color: #93b1cc;
}
.sheet .nospill{
    overflow: hidden;
}
.sheet .price{
    text-align: right;
}
.sheet a{
    color: #0000ee;
    background: linear-gradient(#c0c0c0, #c0c0c0) 0 3px / 100% 14px no-repeat;
    text-underline-offset: 2px;
}
.sheet a.plain{
    background: none;
}
.sheet .typo{
    text-decoration: underline wavy #d22 1px;
}
.cut{
    position: relative;
}
.cut div{
    overflow: hidden;
    margin-right: 2px;
}
.cut::before, .cut::after{
    content: "";
    position: absolute;
    right: 0;
    top: 50%;
    margin-top: -4px;
    border: 4px solid transparent;
    border-left-color: #000;
    border-right: none;
}
.cut::after{
    right: 1px;
    margin-top: -3px;
    border-width: 3px;
    border-right: none;
    border-left-color: #f00;
}
.sheet .head th{
    height: 30px;
}
.sheet .head td{
    height: 30px;
    padding-top: 2px;
    vertical-align: top;
    font-family: "Liberation Sans", Arial, sans-serif;
    font-size: 12px;
    line-height: 18px;
    font-weight: 700;
}
.sheet .head td:nth-child(-n+8){
    color: #fff;
    background-color: #2e95bf;
    border-right-color: #2e95bf;
}
.sheet .head td.a{
    padding: 1px;
    color: #b9def2;
    background-color: #248cc6;
    border: 1px solid #0b2440;
}
.vscroll{
    width: 17px;
    display: flex;
    flex-direction: column;
    align-items: center;
}
.vscroll svg{
    width: 10px;
    height: 17px;
}
.vscroll .split{
    width: 100%;
    height: 5px;
    background: linear-gradient(#000, #000) center / 9px 1px no-repeat #999;
}
.vscroll .thumb{
    width: 15px;
    height: 51px;
    background-color: #cdcdcd;
}
.vscroll .last{
    margin-top: auto;
}
.hscroll{
    height: 17px;
    display: flex;
    align-items: center;
    padding-right: 17px;
}
.hscroll svg{
    width: 16px;
    height: 10px;
}
.hscroll .thumb{
    width: 45.6%;
    height: 15px;
    background-color: #cdcdcd;
}
.hscroll .last{
    margin-left: auto;
}
.hscroll .split{
    width: 5px;
    height: 17px;
    margin-left: 1px;
    background: linear-gradient(#000, #000) center / 1px 9px no-repeat #999;
}
.tabs{
    height: 18px;
    display: flex;
    align-items: flex-start;
    padding-left: 6px;
    border-bottom: 1px solid #a8a8a8;
}
.tabs button{
    width: 17px;
    height: 17px;
}
.tabs svg{
    width: 10px;
    height: 10px;
}
.tabs .add{
    width: 29px;
}
.tabs .tab{
    width: auto;
    padding: 0 10px;
    font-weight: 700;
    background-color: #fff;
    border: 1px solid #606060;
    border-top: none;
}
.handle{
    width: 7px;
    display: flex;
    align-items: center;
    background-color: #f8f8f8;
    border: 1px solid #999;
    border-top: none;
}
.handle i{
    flex: none;
    width: 7px;
    height: 73px;
    margin-left: -1px;
    display: flex;
    align-items: center;
    background-color: #646464;
}
.handle i::before{
    content: "";
    margin-left: 1px;
    border: 4px solid transparent;
    border-left: 5px solid #fff;
    border-right: none;
}
.sidebar{
    width: 40px;
    padding-top: 5px;
    display: flex;
    flex-direction: column;
    align-items: center;
    gap: 5px;
    border-bottom: 1px solid #999;
}
.sidebar button{
    width: 32px;
    height: 30px;
}
.sidebar svg{
    width: 22px;
    height: 22px;
}
.sidebar hr{
    width: 24px;
    margin: -1px 0 -3px;
    border: none;
    border-top: 1px solid #ddd;
}
.sidebar .on{
    height: 32px;
    border: 1px solid #b0b0b0;
    border-radius: 4px;
}

/* find bar */
.findbar{
    height: 38px;
    display: flex;
    align-items: center;
    padding: 0 0 2px 3px;
}
.find{
    width: 250px;
}
.find input::placeholder{
    color: #808080;
}
.all{
    margin: 0 8px 0 4px;
    color: #808080;
}
.findbar label{
    display: flex;
    align-items: center;
    gap: 4px;
    margin-right: 3px;
}
.findbar input[type="checkbox"]{
    appearance: none;
    width: 13px;
    height: 13px;
    margin: 0;
    border: 1px solid #333;
    background-color: #fff;
}

/* taskbar */
.taskbar{
    height: 40px;
    display: flex;
    background-color: #04090f;
    color: #fff;
}
.taskbar button{
    width: 48px;
    height: 40px;
    margin-right: 1px;
}
.taskbar .sys{
    margin-right: 0;
}
.taskgap{
    width: 3px;
}
.taskbar button svg{
    width: 24px;
    height: 24px;
}
.taskbar .sys svg{
    width: 16px;
    height: 16px;
}
.taskbar .run{
    background: linear-gradient(#76b9ed, #76b9ed) bottom / 40px 2px no-repeat;
}
.taskbar .active{
    background: linear-gradient(#76b9ed, #76b9ed) bottom / 48px 2px no-repeat #3a3e44;
}
.ps span{
    width: 21px;
    height: 20px;
    border: 1px solid #2fc5f5;
    color: #2fc5f5;
    font-size: 12px;
    font-weight: 600;
    line-height: 18px;
}
.tray{
    margin-left: auto;
    margin-right: 4px;
    padding-right: 12px;
    display: flex;
    align-items: center;
    gap: 8px;
    border-right: 1px solid #666;
}
.tray svg{
    width: 16px;
    height: 16px;
}
.lang{
    margin-left: 4px;
    font-size: 12px;
}
.clock{
    width: 64px;
    text-align: center;
    line-height: 18px;
}
.notes{
    position: relative;
    width: 24px;
    margin-left: 5px;
}
.notes b{
    position: absolute;
    left: 7px;
    top: 6px;
    width: 16px;
    height: 16px;
    border: 1px solid #888;
    border-radius: 50%;
    background-color: #33373c;
    line-height: 14px;
    text-align: center;
}

/* Data menu */
.menu{
    position: absolute;
    left: 343px;
    top: 49px;
    width: 226px;
    margin: 0;
    padding: 2px 0 1px;
    list-style: none;
    background-color: #f1f1f1;
    border: 1px solid #999;
    box-shadow: 3px 3px 4px rgba(0, 0, 0, 0.5);
}
.menu li{
    position: relative;
    height: 21px;
    padding-left: 40px;
    display: flex;
    align-items: center;
}
.menu .icon{
    height: 24px;
    padding-left: 9px;
}
.menu .icon svg{
    width: 18px;
    height: 18px;
    margin-right: 13px;
}
.menu .line{
    height: 8px;
}
.menu .line::before{
    content: "";
    flex: 1;
    height: 2px;
    margin: 0 3px 0 -6px;
    border-top: 1px solid #cdcdcd;
}
.menu .off{
    color: #8a8a8a;
}
.menu .off svg{
    opacity: 0.4;
}
.menu .sub::after{
    content: "";
    margin-left: auto;
    margin-right: 9px;
    border: 4px solid transparent;
    border-left-color: #000;
    border-right: none;
}
.menu .chosen{
    background-color: #91c9f7;
}
.menu .chosen::before{
    content: "";
    position: absolute;
    inset: -3px -2px -2px 0;
    border: 3px solid #f40b0b;
    border-radius: 10px;
}

/* hint */
.arrows{
    position: absolute;
    left: 339px;
    top: 40px;
    width: 400px;
    height: 440px;
    pointer-events: none;
    filter: drop-shadow(2px 3px 2px rgba(0, 0, 0, 0.4));
}
.a-blue{
    fill: none;
    stroke: #0860aa;
    stroke-width: 8;
}
.a-white{
    fill: none;
    stroke: #d5e4f0;
    stroke-width: 2;
}
.a-head{
    fill: #fff;
    stroke: #0860aa;
    stroke-width: 3;
}
.callout{
    position: absolute;
    left: 655px;
    top: 300px;
    width: 541px;
    height: 102px;
    padding: 0 9px;
    border: 3px solid #0860aa;
    border-radius: 9px;
    background: linear-gradient(#e8e8e8, #d9d9d9);
    box-shadow: 2px 3px 4px rgba(0, 0, 0, 0.45);
    color: #2c62b9;
    font-size: 37px;
    line-height: 43px;
    font-weight: 700;
    white-space: nowrap;
}
```
